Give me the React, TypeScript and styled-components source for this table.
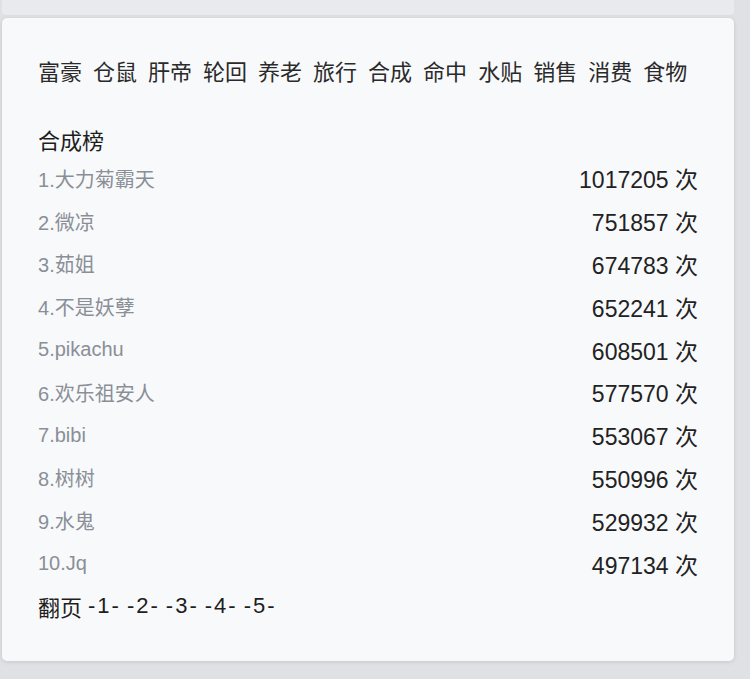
import React from "react";
import styled, { createGlobalStyle } from "styled-components";

const GlobalStyle = createGlobalStyle`
  html, body {
    margin: 0;
    padding: 0;
    background: #dfe1e5;
    font-family: "Liberation Sans", "Noto Sans CJK SC", sans-serif;
    color: #222;
  }
`;

const Page = styled.div`
  padding: 0 16px 0 2px;
  min-height: 679px;
  box-sizing: border-box;
`;

const PrevCard = styled.div`
  height: 16px;
  margin-bottom: 2px;
  background: #e9eaed;
  border-bottom: 1px solid #dcdee2;
  border-radius: 0 0 4px 4px;
  box-sizing: border-box;
`;

const Card = styled.section`
  background: #f8f9fb;
  border-radius: 5px;
  box-shadow: 0 1px 4px rgba(0, 0, 0, 0.12);
  padding: 40px 36px 33px 36px;
`;

const Tabs = styled.nav`
  display: flex;
  gap: 11px;
  font-size: 22px;
  line-height: 30px;
  color: #2a2a2a;
  white-space: nowrap;
`;

const Tab = styled.span`
  cursor: pointer;
`;

const Title = styled.h2`
  margin: 39px 0 0 0;
  font-size: 22px;
  line-height: 30px;
  font-weight: normal;
  color: #1e1e1e;
`;

const Row = styled.div`
  display: flex;
  justify-content: space-between;
  align-items: center;
  height: 42.8px;
`;

const Name = styled.span`
  font-size: 20px;
  color: #8a8f97;
`;

const Count = styled.span`
  font-size: 23px;
  color: #222;
`;

const Pager = styled.div`
  display: flex;
  gap: 6px;
  align-items: center;
  height: 42.8px;
  font-size: 22px;
  color: #1e1e1e;
`;

const PageLink = styled.span`
  cursor: pointer;
  letter-spacing: 2px;
`;

const tabs = ["富豪", "仓鼠", "肝帝", "轮回", "养老", "旅行", "合成", "命中", "水贴", "销售", "消费", "食物"];

const ranks = [
  { name: "大力菊霸天", count: 1017205 },
  { name: "微凉", count: 751857 },
  { name: "茹姐", count: 674783 },
  { name: "不是妖孽", count: 652241 },
  { name: "pikachu", count: 608501 },
  { name: "欢乐祖安人", count: 577570 },
  { name: "bibi", count: 553067 },
  { name: "树树", count: 550996 },
  { name: "水鬼", count: 529932 },
  { name: "Jq", count: 497134 },
];

export default function App() {
  return (
    <>
      <GlobalStyle />
      <Page>
        <PrevCard />
        <Card>
          <Tabs>
            {tabs.map((t) => (
              <Tab key={t}>{t}</Tab>
            ))}
          </Tabs>
          <Title>合成榜</Title>
          {ranks.map((r, i) => (
            <Row key={r.name}>
              <Name>
                {i + 1}.{r.name}
              </Name>
              <Count>{r.count} 次</Count>
            </Row>
          ))}
          <Pager>
            <span>翻页</span>
            {[1, 2, 3, 4, 5].map((n) => (
              <PageLink key={n}>-{n}-</PageLink>
            ))}
          </Pager>
        </Card>
      </Page>
    </>
  );
}
